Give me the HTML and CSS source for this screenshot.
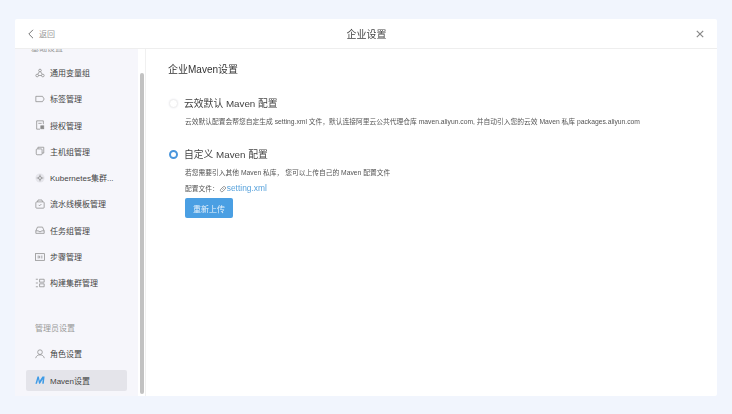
FILE: index.html
```html
<!DOCTYPE html>
<html lang="zh-CN">
<head>
  <meta charset="UTF-8" />
  <title>企业设置</title>
  <link rel="stylesheet" href="styles.css">
</head>
<body>
  <div class="modal">
    <header class="top">
      <a class="back">
        <svg width="8" height="10" viewBox="0 0 8 10"><path d="M6 .8 1.8 5 6 9.2" fill="none" stroke="#777" stroke-width="1"/></svg>
        <span>返回</span>
      </a>
      <div class="title">企业设置</div>
      <svg class="close" width="8" height="8" viewBox="0 0 8 8"><path d="M.8.8l6.4 6.4M7.2.8.8 7.2" stroke="#888" stroke-width="1.200"/></svg>
    </header>

    <div class="main">
      <aside class="side">
        <nav class="nav">
          <div class="group cut">基础设置</div>

          <a class="item">
            <svg class="ico" viewBox="0 0 12 12"><circle cx="6" cy="3" r="1.6"/><circle cx="2.6" cy="9" r="1.6"/><circle cx="9.4" cy="9" r="1.6"/><path d="M5.2 4.4 3.4 7.6M6.8 4.4l1.8 3.2M4.2 9h3.6"/></svg>
            <span>通用变量组</span>
          </a>
          <a class="item">
            <svg class="ico" viewBox="0 0 12 12"><path d="M1 2.800h8l2 3.200-2 3.200H1z"/></svg>
            <span>标签管理</span>
          </a>
          <a class="item">
            <svg class="ico" viewBox="0 0 12 12"><path d="M10 5V1H2v10h4"/><path d="M4 4h4"/><rect x="7" y="7" width="3.500" height="3.500" fill="#8a8a8a"/></svg>
            <span>授权管理</span>
          </a>
          <a class="item">
            <svg class="ico" viewBox="0 0 12 12"><rect x="1.500" y="3.500" width="7" height="7" rx="1"/><path d="M3.500 3.500v-2h7v7h-2"/></svg>
            <span>主机组管理</span>
          </a>
          <a class="item">
            <svg class="ico" viewBox="0 0 12 12"><circle cx="6" cy="6" r="5.500" fill="#e6e6ec" stroke="none"/><circle cx="6" cy="6" r="1.800"/><path d="M6 2v2.200M6 7.800V10M2 6h2.200M7.800 6H10"/></svg>
            <span>Kubernetes集群...</span>
          </a>
          <a class="item">
            <svg class="ico" viewBox="0 0 12 12"><rect x="1" y="3.500" width="10" height="7.500" rx="1"/><path d="M3 3.500 3.600 1.200h4.800L9 3.500M4.300 7l1.200 1.200L7.700 6"/></svg>
            <span>流水线模板管理</span>
          </a>
          <a class="item">
            <svg class="ico" viewBox="0 0 12 12"><path d="M1 7 3 2.500h6L11 7v3H1z"/><path d="M1 7h3.200l.5 1h2.600l.5-1H11"/></svg>
            <span>任务组管理</span>
          </a>
          <a class="item">
            <svg class="ico" viewBox="0 0 12 12"><rect x=".5" y="2" width="11" height="8"/><path d="M3 5h2.500v2H3M7 5h2M7 7h2"/></svg>
            <span>步骤管理</span>
          </a>
          <a class="item">
            <svg class="ico" viewBox="0 0 12 12"><path d="M1 1.500h2.500M1 6h2.500M1 10.500h2.500M5.500 1.500h5.500v3.500H5.500zM5.500 7h5.500v3.500H5.500z"/></svg>
            <span>构建集群管理</span>
          </a>

          <div class="group">管理员设置</div>

          <a class="item">
            <svg class="ico" viewBox="0 0 12 12"><circle cx="6" cy="3.800" r="2.800"/><path d="M.8 11C1.500 8.200 3.500 7 6 7s4.500 1.200 5.200 4"/></svg>
            <span>角色设置</span>
          </a>
          <a class="item active">
            <svg class="ico maven" viewBox="0 0 12 12"><path d="M.5 10.500 3 1.800h1.600l1 5 3.300-5H11.500L10.500 10.500H8.700l.5-5.300-3.200 5.300H4.800L3.800 5.200 2.400 10.500z"/></svg>
            <span>Maven设置</span>
          </a>
        </nav>
        <div class="scroll"><div class="thumb"></div></div>
      </aside>

      <section class="content">
        <h2>企业Maven设置</h2>

        <div class="opt">
          <span class="radio"></span>
          <h3>云效默认 Maven 配置</h3>
        </div>
        <p class="desc">云效默认配置会帮您自定生成 setting.xml 文件，默认连接阿里云公共代理仓库 maven.aliyun.com, 并自动引入您的云效 Maven 私库 packages.aliyun.com</p>

        <div class="opt second">
          <span class="radio on"></span>
          <h3>自定义 Maven 配置</h3>
        </div>
        <p class="desc">若您需要引入其他 Maven 私库， 您可以上传自己的 Maven 配置文件</p>
        <p class="desc file">
          <span>配置文件：</span>
          <svg width="8" height="8" viewBox="0 0 12 12"><path d="M5 7 7 5M4.500 4.500 6.300 2.700a2.300 2.300 0 0 1 3.200 3.200L7.500 7.500M4.500 4.500 2.500 6.500a2.300 2.300 0 0 0 3.200 3.200L7.500 7.500" fill="none" stroke="#666" stroke-width="1"/></svg>
          <a class="link">setting.xml</a>
        </p>
        <button class="btn">重新上传</button>
      </section>
    </div>
  </div>
</body>
</html>
```

FILE: styles.css
```css
* {
  box-sizing: border-box;
}
html, body {
  height: 100%;
}
body {
  margin: 0;
  padding: 19px 15px 18px;
  background-color: #f1f5fd;
  font-family: "Liberation Sans", "Noto Sans CJK SC", sans-serif;
  color: #444;
  overflow: hidden;
}
.modal {
  height: 100%;
  background: #fff;
  display: flex;
  flex-direction: column;
  border-radius: 2px;
  filter: blur(.35px);
}
.top {
  height: 30px;
  flex: none;
  display: flex;
  align-items: center;
  justify-content: space-between;
  padding: 0 13px 0 12px;
  border-bottom: 1px solid #eee;
  position: relative;
}
.back {
  display: flex;
  align-items: center;
  gap: 4px;
  font-size: 8px;
  color: #999;
}
.title {
  font-size: 10px;
  color: #444;
  position: absolute;
  left: 0;
  right: 0;
  text-align: center;
  margin-left: 1px;
}
.main {
  flex: 1;
  display: flex;
  min-height: 0;
}
.side {
  width: 131px;
  flex: none;
  display: flex;
  border-right: 1px solid #f0f0f0;
}
.nav {
  width: 123px;
  background: #f6f6fb;
  padding: 0 11px;
  overflow: hidden;
}
.group {
  font-size: 8px;
  color: #999;
  height: 12px;
  line-height: 12px;
  margin: 30px 0 8px 9px;
}
.group.cut {
  margin: -6px 0 7px 5px;
}
.item {
  display: flex;
  align-items: center;
  gap: 5px;
  height: 21px;
  margin-bottom: 5.300px;
  padding-left: 9px;
  font-size: 8px;
  color: #444;
  white-space: nowrap;
}
.item.active {
  background: #e4e4ea;
  border-radius: 2px;
}
.ico {
  width: 10px;
  height: 10px;
  flex: none;
  fill: none;
  stroke: #8a8a8a;
  stroke-width: .9;
}
.maven {
  fill: #3f9be6;
  stroke: none;
}
.scroll {
  width: 7px;
  padding: 24px 1px 2px 2px;
}
.thumb {
  height: 100%;
  background: #c2c2c2;
  border-radius: 2px;
}
.content {
  flex: 1;
  padding: 15px 22px;
}
h2 {
  font-size: 10px;
  font-weight: normal;
  color: #333;
  margin: 0 0 20px;
  line-height: 12px;
}
.opt {
  display: flex;
  align-items: center;
  gap: 6px;
  height: 14px;
}
.opt.second {
  margin-top: 21px;
}
h3 {
  font-size: 9.800px;
  font-weight: normal;
  margin: 0;
  color: #444;
}
.radio {
  width: 9px;
  height: 9px;
  margin-left: 1px;
  border-radius: 50%;
  border: 1px solid #eee;
  background: #fff;
  box-shadow: 0 0 2px #e8e8ee;
}
.radio.on {
  border: 2.500px solid #4a96dc;
  box-shadow: none;
}
.desc {
  font-size: 6.750px;
  line-height: 9px;
  margin: 7px 0 0 17px;
  color: #555;
  white-space: nowrap;
}
.file {
  display: flex;
  align-items: center;
  gap: 0;
  margin-top: 7px;
}
.link {
  font-size: 8.400px;
  color: #5aa3dc;
}
.btn {
  display: block;
  margin: 5px 0 0 17px;
  width: 48px;
  height: 20px;
  padding: 0;
  border: 0;
  border-radius: 2px;
  background: #4a9fe3;
  color: #e6f2fc;
  font-family: inherit;
  font-size: 8px;
}
```
